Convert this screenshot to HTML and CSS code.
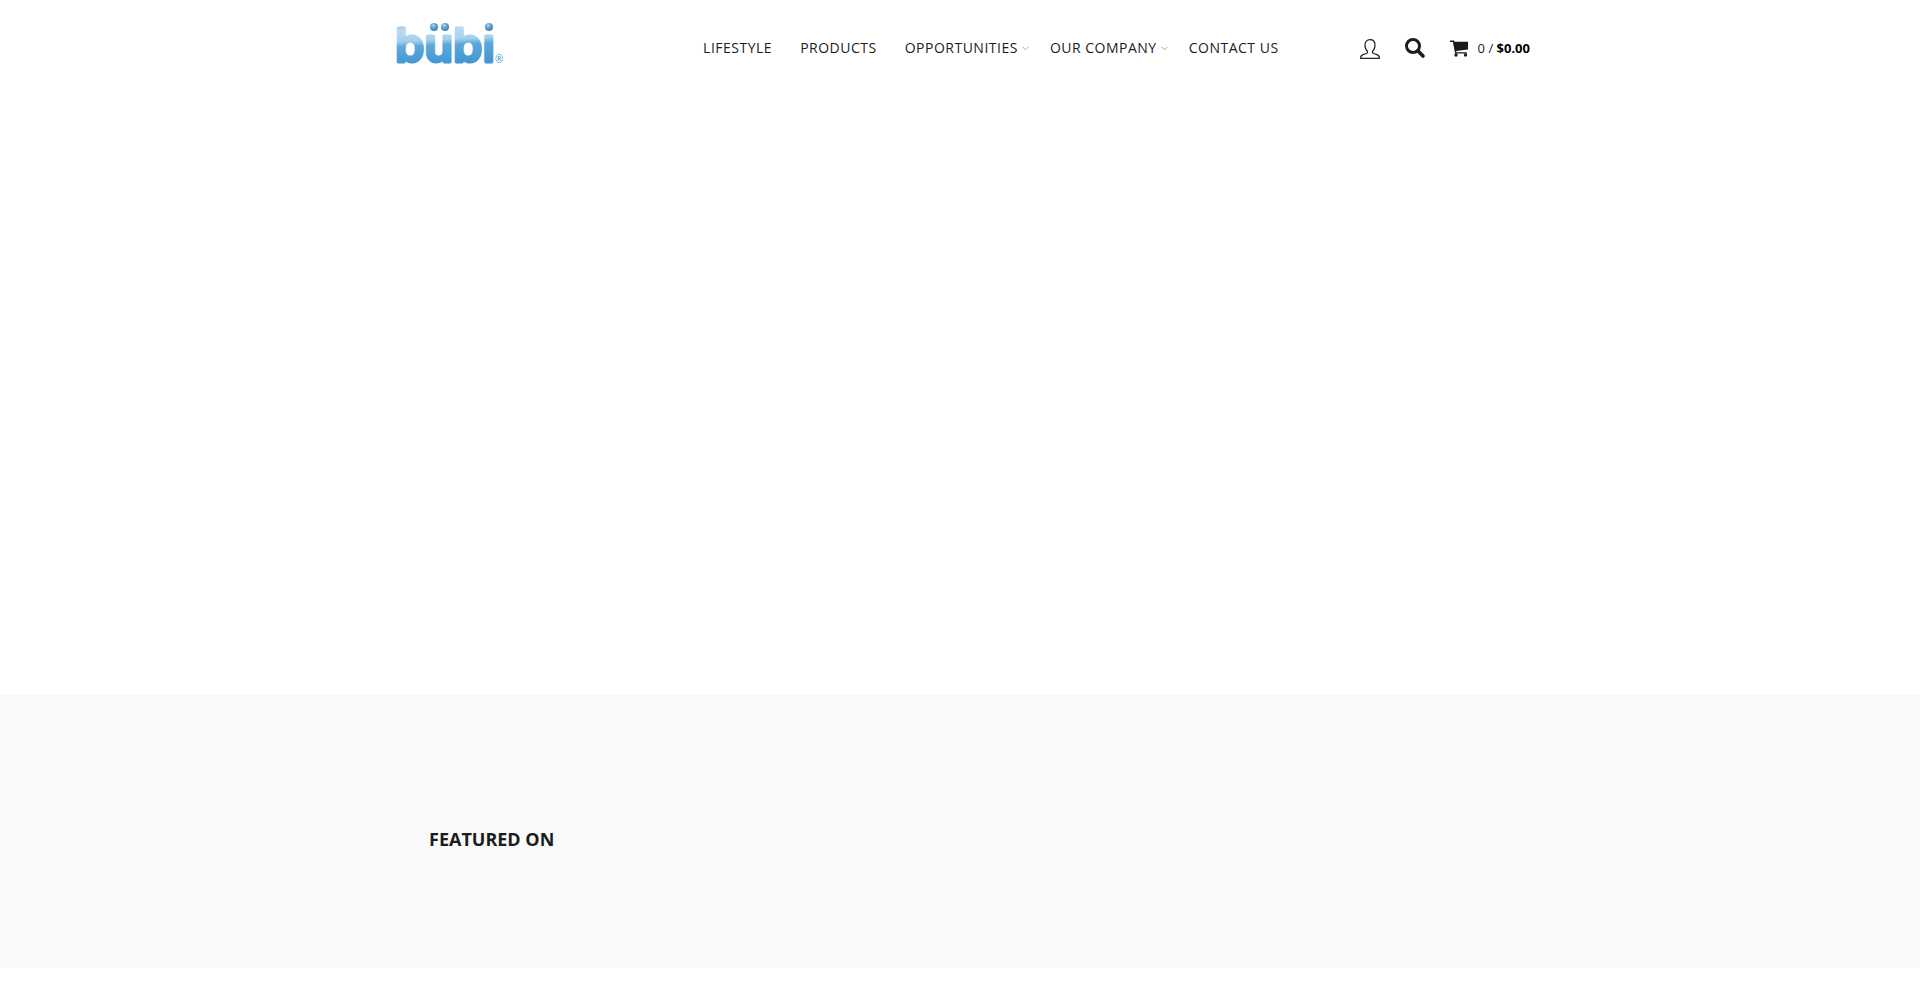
FILE: index.html
```
<!DOCTYPE html>
<html lang="en">
<head>
  <meta charset="UTF-8">
  <meta name="viewport" content="width=device-width, initial-scale=1.0">
  <title>bübi</title>
  <link rel="stylesheet" href="styles.css">
</head>
<body>

  <!-- Header -->
  <header class="header">
    <div class="container header-row">
      <a class="logo" href="#" aria-label="bübi">
        <svg width="120" height="64" viewBox="0 0 120 64">
          <defs>
            <linearGradient id="letters" gradientUnits="userSpaceOnUse" x1="0" y1="12" x2="2" y2="54">
              <stop offset="0" stop-color="#8fc4e6"/>
              <stop offset="0.2" stop-color="#b9dcf1"/>
              <stop offset="0.45" stop-color="#a3d0ec"/>
              <stop offset="0.58" stop-color="#5ca8da"/>
              <stop offset="1" stop-color="#4398d2"/>
            </linearGradient>
            <radialGradient id="ball" cx="0.4" cy="0.3" r="0.7">
              <stop offset="0" stop-color="#b5d9ee"/>
              <stop offset="0.5" stop-color="#5b9fcd"/>
              <stop offset="1" stop-color="#3b82b8"/>
            </radialGradient>
          </defs>
          <text class="logo-text" x="5" y="51">bubı</text>
          <circle cx="44" cy="16" r="4" fill="url(#ball)"/>
          <circle cx="55" cy="16" r="4" fill="url(#ball)"/>
          <circle cx="99" cy="16" r="4" fill="url(#ball)"/>
          <text class="logo-mark" x="105" y="52">®</text>
        </svg>
      </a>

      <nav class="menu">
        <a href="#">LIFESTYLE</a>
        <a href="#">PRODUCTS</a>
        <a class="has-sub" href="#">OPPORTUNITIES
          <svg class="caret" width="7" height="5" viewBox="0 0 7 5"><path d="M0.5 0.8 3.5 3.8 6.5 0.8"/></svg>
        </a>
        <a class="has-sub" href="#">OUR COMPANY
          <svg class="caret" width="7" height="5" viewBox="0 0 7 5"><path d="M0.5 0.8 3.5 3.8 6.5 0.8"/></svg>
        </a>
        <a href="#">CONTACT US</a>
      </nav>

      <div class="tools">
        <a class="account" href="#" aria-label="Account">
          <svg width="20" height="20" viewBox="0 0 20 20" fill="none" stroke="#222" stroke-width="1.2" stroke-linejoin="round">
            <path d="M10 .7C6.900.7 5 2.700 5 6c0 2.900.9 5 2.500 6.400.4 1.100 0 1.700-1 2.100L3 15.600C1.300 16.200.6 17.200.6 19.300h18.800c0-2.100-.7-3.100-2.400-3.700l-3.500-1.100c-1-.4-1.400-1-1-2.100C14.100 11 15 8.900 15 6 15 2.700 13.100.7 10 .7z"/>
          </svg>
        </a>
        <button class="search" type="button" aria-label="Search">
          <svg width="20" height="20" viewBox="0 0 20 20" fill="none" stroke="#1c1c1c">
            <circle cx="8" cy="8" r="6.500" stroke-width="3"/>
            <path d="M12.800 12.800 18 18" stroke-width="3.600" stroke-linecap="round"/>
          </svg>
        </button>
        <a class="cart" href="#">
          <svg width="19" height="17" viewBox="0 0 19 17" fill="#1c1c1c">
            <path d="M0 .5h4l.5 1.300H18v7.700L6.200 11l.3 1.200H17v1.200H5.100L2.900 1.900H0z"/>
            <circle cx="6" cy="15" r="1.700"/>
            <circle cx="15.500" cy="15" r="1.700"/>
          </svg>
          <span>0 / <b>$0.00</b></span>
        </a>
      </div>
    </div>
  </header>

  <!-- Slider area -->
  <section class="slider"></section>

  <!-- Featured -->
  <section class="featured">
    <div class="container">
      <h3>FEATURED ON</h3>
    </div>
  </section>

</body>
</html>
```
FILE: styles.css
```
* {
  box-sizing: border-box;
}
body {
  margin: 0;
  font-family: "Open Sans", sans-serif;
  font-size: 14px;
  color: #1c1c1c;
  background-color: #fff;
}
a {
  color: inherit;
  text-decoration: none;
}
.container {
  max-width: 1170px;
  margin: 0 auto;
  padding: 0 15px;
}
.header-row {
  display: flex;
  align-items: center;
  height: 96px;
}
.logo {
  margin-bottom: 10px;
}
.logo svg,
.tools svg {
  display: block;
  overflow: visible;
}
.logo-text {
  font-family: Inter, sans-serif;
  font-size: 47px;
  font-weight: 600;
  fill: url(#letters);
  stroke: url(#letters);
  stroke-width: 3px;
  stroke-linejoin: round;
}
.logo-mark {
  font-family: "Open Sans", sans-serif;
  font-size: 10px;
  fill: #3f92c8;
}
.menu {
  display: flex;
  gap: 28px;
  margin-left: auto;
  letter-spacing: 0.5px;
  line-height: 20px;
}
.has-sub {
  display: flex;
  align-items: center;
  gap: 4px;
  margin-right: -7px;
}
.caret {
  fill: none;
  stroke: #aaa;
}
.tools {
  display: flex;
  align-items: center;
  gap: 25px;
  margin-left: 81px;
}
.account {
  padding-top: 2px;
}
.search {
  padding: 0;
  border: 0;
  background: none;
  cursor: pointer;
}
.cart {
  display: flex;
  align-items: center;
  gap: 9px;
  font-size: 13px;
}
.cart b {
  color: #000;
}
.slider {
  height: 599px;
}
.featured {
  padding: 132px 0 116px;
  background-color: #f9f9f9;
}
.featured h3 {
  margin: 0;
  padding-left: 39px;
  font-size: 18px;
  line-height: 25px;
  color: #1c1c1c;
}
```
